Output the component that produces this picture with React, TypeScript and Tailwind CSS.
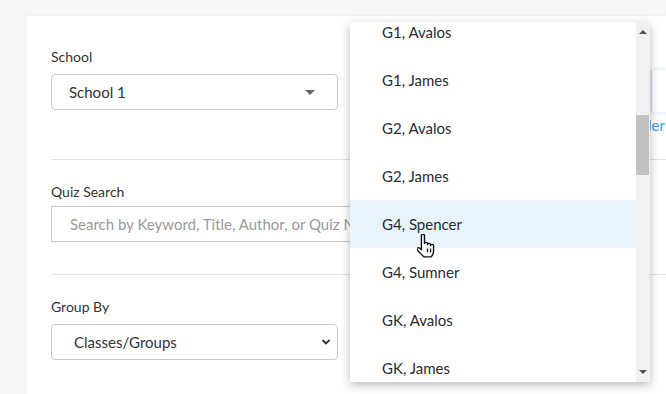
import React from "react";

const classes = [
  "G1, Avalos",
  "G1, James",
  "G2, Avalos",
  "G2, James",
  "G4, Spencer",
  "G4, Sumner",
  "GK, Avalos",
  "GK, James",
];

function HandCursor() {
  return (
    <svg
      width="19"
      height="24"
      viewBox="2 1 15 22.5"
      preserveAspectRatio="none"
      className="absolute left-[417px] top-[234px]"
    >
      <path
        d="M5.5 2.5a1.2 1.2 0 0 1 2.4 0V10a1.2 1.2 0 0 1 2.4 0v1a1.2 1.2 0 0 1 2.4 0v1a1.2 1.2 0 0 1 2.4 0v5c0 2.2-0.8 4-2 5.5H7.5L3 17c-1-1.2-1.4-2.3-0.6-3 0.8-0.6 1.7 0 3.1 1.8Z"
        fill="#fff"
        stroke="#111"
        strokeWidth="1.1"
        strokeLinejoin="round"
      />
      <path d="M10.3 14.5v3.5M12.7 14.5v3.5" stroke="#111" strokeWidth="1" />
    </svg>
  );
}

function ClassDropdown() {
  return (
    <div className="absolute left-[350px] top-[22px] w-[300px] h-[360px] bg-white flex overflow-hidden rounded-[2px] shadow-[0_3px_10px_rgba(0,0,0,0.28)]">
      <div className="flex-1 overflow-hidden">
        <div className="-mt-[14px]">
          {classes.map((c) => (
            <div
              key={c}
              className={`h-[48px] flex items-center pl-[32px] text-[15px] text-[#2b2b2b] ${
                c === "G4, Spencer" ? "bg-[#e8f3fb]" : ""
              }`}
            >
              {c}
            </div>
          ))}
        </div>
      </div>
      <div className="w-[14px] bg-[#f1f1f1] flex flex-col items-center">
        <div className="h-[18px] flex items-center justify-center pt-[2px]">
          <div className="w-0 h-0 border-l-[4px] border-r-[4px] border-b-[4px] border-l-transparent border-r-transparent border-b-[#505050]" />
        </div>
        <div className="mt-[75px] w-[13px] -ml-[1px] h-[60px] bg-[#c1c1c1]" />
        <div className="flex-1" />
        <div className="h-[18px] flex items-center justify-center pb-[2px]">
          <div className="w-0 h-0 border-l-[4px] border-r-[4px] border-t-[4px] border-l-transparent border-r-transparent border-t-[#505050]" />
        </div>
      </div>
    </div>
  );
}

export default function App() {
  return (
    <div
      className="relative w-full h-[394px] bg-[#f7f7f7] overflow-hidden"
      style={{ fontFamily: '"Source Sans Pro", Lato, "Liberation Sans", sans-serif' }}
    >
      <div className="ml-[26px] mt-[16px] h-[400px] bg-white pl-[25px] pt-[32px] shadow-[0_0_2px_rgba(0,0,0,0.08)]">
        {/* School */}
        <div className="flex h-[62px]">
          <div className="w-[287px] shrink-0">
            <div className="text-[14px] leading-[18px] text-[#333]">School</div>
            <div className="mt-[8px] h-[36px] border border-[#c8c8c8] rounded-[4px] flex items-center pl-[17px] pr-[22px] text-[15px] text-[#333]">
              <span className="flex-1">School 1</span>
              <div className="w-0 h-0 border-l-[5px] border-r-[5px] border-t-[5px] border-l-transparent border-r-transparent border-t-[#666]" />
            </div>
          </div>
          <div className="ml-[313px] shrink-0 pt-[22px]">
            <div className="w-[200px] h-[42px] border-l border-[#c6ddf1] shadow-[-2px_0_5px_rgba(90,150,215,0.25)]" />
            <div className="mt-[2px] -ml-[3px] text-[15px] text-[#3b9ee0]">ler</div>
          </div>
        </div>

        <div className="mt-[49px] h-px bg-[#e3e3e3]" />

        {/* Quiz Search */}
        <div className="mt-[23px] text-[14px] leading-[18px] text-[#333]">Quiz Search</div>
        <input
          className="mt-[5px] w-[580px] h-[36px] border border-[#c8c8c8] pl-[18px] text-[15px] text-[#333] placeholder:text-[#999] outline-none"
          placeholder="Search by Keyword, Title, Author, or Quiz Number"
        />

        <div className="mt-[32px] h-px bg-[#e3e3e3]" />

        {/* Group By */}
        <div className="mt-[23px] text-[14px] leading-[18px] text-[#333]">Group By</div>
        <div className="mt-[8px] w-[287px] h-[36px] border border-[#c8c8c8] rounded-[4px] flex items-center pl-[22px] pr-[6px] text-[15px] text-[#333]">
          <span className="flex-1">Classes/Groups</span>
          <svg width="10" height="8" viewBox="0 0 10 8">
            <path d="M1.5 2l3.5 3.5L8.5 2" fill="none" stroke="#333" strokeWidth="1.8" />
          </svg>
        </div>
      </div>

      <ClassDropdown />
      <HandCursor />
    </div>
  );
}
